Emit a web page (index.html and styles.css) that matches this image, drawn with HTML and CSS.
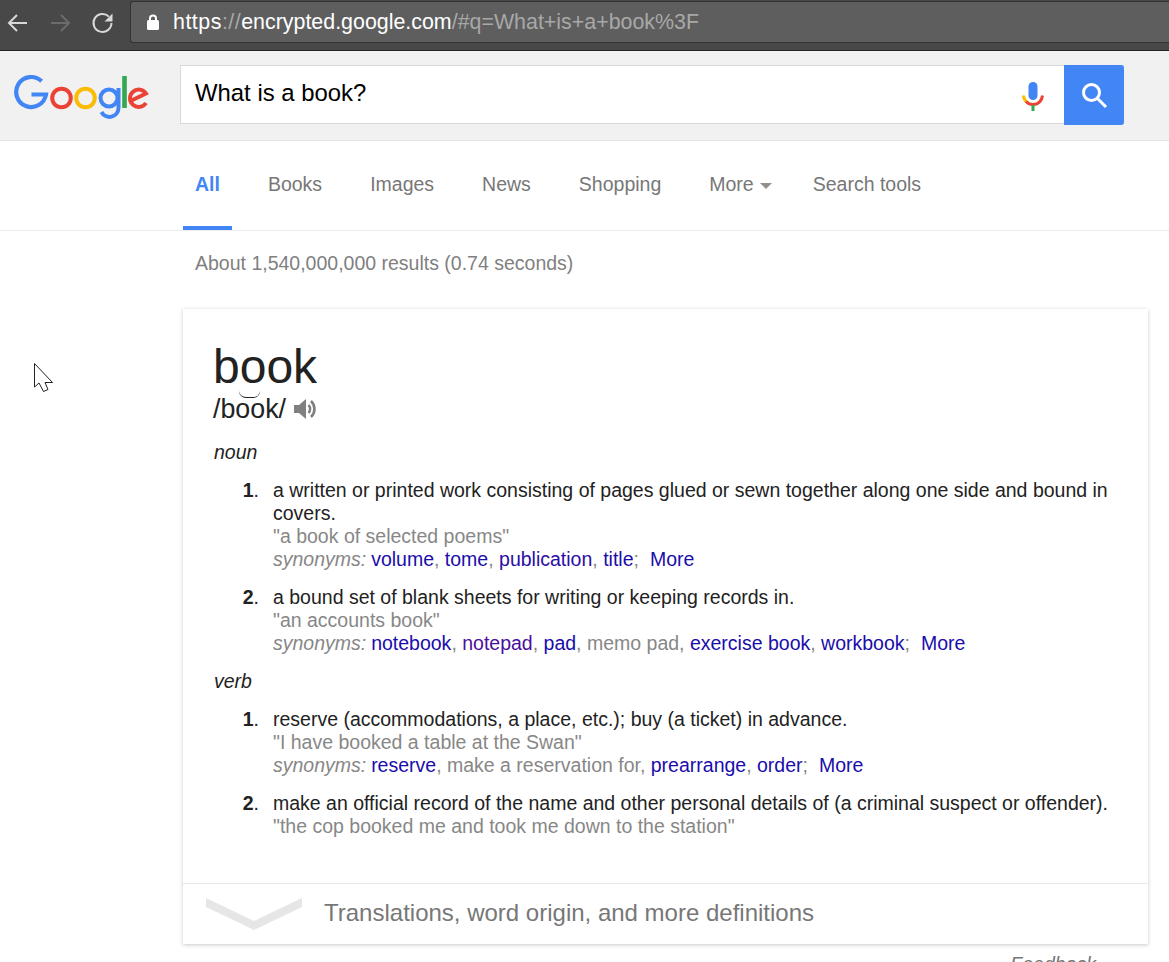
FILE: index.html
```html
<!DOCTYPE html>
<html lang="en">
<head>
<meta charset="utf-8">
<title>What is a book? - Google Search</title>
<link rel="stylesheet" href="styles.css">
</head>
<body>
<div class="chrome">
  <svg class="nav-icons" width="118" height="40" viewBox="0 0 118 40" fill="none" aria-hidden="true">
    <path d="M27 21H9M17 13l-8 8 8 8" stroke="#d8d8d8" stroke-width="2"/>
    <path d="M51 21h18M61 13l8 8-8 8" stroke="#6c6c6c" stroke-width="2"/>
    <path d="M111.500 21a9 9 0 1 1-2.600-6.400" stroke="#d8d8d8" stroke-width="2"/>
    <path d="M112.500 11.500v8h-8z" fill="#d8d8d8"/>
  </svg>
  <div class="omnibox">
    <svg class="lock" width="14" height="18" viewBox="0 0 14 18" aria-hidden="true">
      <path d="M4 8V5.500a3 3 0 0 1 6 0V8" fill="none" stroke="#fff" stroke-width="2"/>
      <rect x="1" y="7" width="12" height="10" rx="1.500" fill="#fff"/>
    </svg>
    <span class="url"><span class="url-main url-scheme">https</span><span class="url-dim url-scheme">://</span><span class="url-main">encrypted.google.com</span><span class="url-dim">/#q=What+is+a+book%3F</span></span>
  </div>
</div>

<header class="searchbar">
  <svg class="logo" width="138" height="48" viewBox="0 0 138 48" fill="none" role="img" aria-label="Google">
    <path d="M27.600 8.200A15 15 0 1 0 32 21.500H17.500" stroke="#4285f4" stroke-width="4.200"/>
    <circle cx="47.500" cy="25" r="9.300" stroke="#ea4335" stroke-width="4"/>
    <circle cx="71.500" cy="25" r="9.300" stroke="#fbbc05" stroke-width="4"/>
    <circle cx="95" cy="25" r="8.500" stroke="#4285f4" stroke-width="4"/>
    <path d="M104.500 15v20a9 9 0 0 1-17 4" stroke="#4285f4" stroke-width="4"/>
    <path d="M110.500 3v32" stroke="#34a853" stroke-width="4.600"/>
    <path d="M132 30A8.700 8.700 0 1 1 132 20.500L117.500 27.500" stroke="#ea4335" stroke-width="4"/>
  </svg>
  <div class="searchbox">
    <span class="query">What is a book?</span>
    <svg class="mic" width="22" height="30" viewBox="0 0 22 30" fill="none" aria-hidden="true">
      <rect x="6.500" y="1" width="9" height="18" rx="4.500" fill="#4285f4"/>
      <path d="M1.500 14.500a9.500 9.500 0 0 0 3 6.500" stroke="#fbbc05" stroke-width="3"/>
      <path d="M4 20.500a9.500 9.500 0 0 0 14 0c1.500-1.700 2.200-3.800 2.500-6" stroke="#ea4335" stroke-width="3"/>
      <rect x="9.500" y="24" width="3" height="6" fill="#34a853"/>
    </svg>
    <button class="search-btn" aria-label="Search">
      <svg width="28" height="28" viewBox="0 0 28 28" fill="none" aria-hidden="true">
        <circle cx="11.500" cy="11.500" r="8" stroke="#fff" stroke-width="3"/>
        <path d="M17.500 17.500L26 26" stroke="#fff" stroke-width="3"/>
      </svg>
    </button>
  </div>
</header>

<nav class="tabs">
  <a class="tab active">All</a>
  <a class="tab">Books</a>
  <a class="tab">Images</a>
  <a class="tab">News</a>
  <a class="tab">Shopping</a>
  <a class="tab">More<span class="caret"></span></a>
  <a class="tab tools">Search tools</a>
</nav>

<main class="results">
  <p class="stats">About 1,540,000,000 results (0.74 seconds)</p>
  <section class="card">
    <div class="card-body">
      <h1 class="word">book</h1>
      <div class="phon">
        <span class="phon-text">/b<span class="tie">o</span>ok/</span>
        <svg class="speaker" width="24" height="24" viewBox="0 0 24 24" aria-hidden="true">
          <path d="M1 8h5l7-6v20l-7-6H1z" fill="#808080"/>
          <path d="M15.500 8a6 6 0 0 1 0 8" fill="none" stroke="#808080" stroke-width="2.600"/>
          <path d="M18 4a11 11 0 0 1 0 16" fill="none" stroke="#808080" stroke-width="2.600"/>
        </svg>
      </div>

      <div class="pos">noun</div>
      <ol class="defs">
        <li class="def"><span class="num"><b>1</b>.</span><div>a written or printed work consisting of pages glued or sewn together along one side and bound in covers.<div class="eg">"a book of selected poems"</div><div class="syn"><em>synonyms:</em> <a class="lnk">volume</a>, <a class="lnk">tome</a>, <a class="vis-soft">publication</a>, <a class="lnk">title</a>;<a class="lnk more">More</a></div></div></li>
        <li class="def"><span class="num"><b>2</b>.</span><div>a bound set of blank sheets for writing or keeping records in.<div class="eg">"an accounts book"</div><div class="syn"><em>synonyms:</em> <a class="lnk">notebook</a>, <a class="vis">notepad</a>, <a class="lnk">pad</a>, memo pad, <a class="lnk">exercise book</a>, <a class="lnk">workbook</a>;<a class="lnk more">More</a></div></div></li>
      </ol>

      <div class="pos">verb</div>
      <ol class="defs">
        <li class="def"><span class="num"><b>1</b>.</span><div>reserve (accommodations, a place, etc.); buy (a ticket) in advance.<div class="eg">"I have booked a table at the Swan"</div><div class="syn"><em>synonyms:</em> <a class="lnk">reserve</a>, make a reservation for, <a class="lnk">prearrange</a>, <a class="lnk">order</a>;<a class="lnk more">More</a></div></div></li>
        <li class="def"><span class="num"><b>2</b>.</span><div>make an official record of the name and other personal details of (a criminal suspect or offender).<div class="eg">"the cop booked me and took me down to the station"</div></div></li>
      </ol>
    </div>
    <div class="card-foot">
      <svg width="98" height="34" viewBox="0 0 98 34" aria-hidden="true">
        <path d="M1 1l48 23 48-23v9L49 33 1 10z" fill="#e6e6e6"/>
      </svg>
      <span class="foot-text">Translations, word origin, and more definitions</span>
    </div>
  </section>
  <div class="feedback">Feedback</div>
</main>

<svg class="cursor" width="21" height="31" viewBox="0 0 21 31" aria-hidden="true">
  <path d="M1.500 1.500V25L6 21l4.500 8.500L15 27.500 12 20.500h7.500z" fill="#fff" stroke="#222" stroke-width="1"/>
</svg>
</body>
</html>
```
FILE: styles.css
```css
* { box-sizing: border-box; }
html, body { margin: 0; height: 962px; overflow: hidden; background: #fff; }
body { font-family: "Liberation Sans", Arial, sans-serif; font-size: 19.5px; line-height: 23px; color: #222; position: relative; }
a { text-decoration: none; }

.chrome { height: 51px; background: #484848; border-bottom: 1px solid #222; display: flex; padding: 1px 0 0 0; }
.nav-icons { flex: none; margin: 1px 12px 0 0; }
.omnibox { flex: 1; height: 42px; background: #5e5e5e; border: 1px solid #333; border-right: 0; border-radius: 3px 0 0 3px; display: flex; align-items: center; padding-left: 15px; }
.lock { flex: none; margin-right: 13px; }
.url { font-size: 21.400px; margin-top: 1px; }
.url-scheme { letter-spacing: .5px; }
.url-main { color: #fff; }
.url-dim { color: #a8a8a8; }

.searchbar { height: 90px; background: #f1f1f1; border-bottom: 1px solid #e5e5e5; display: flex; padding: 14px 0 0 14px; }
.logo { flex: none; margin: 8px 28px 0 0; }
.searchbox { width: 944px; height: 59px; background: #fff; border: 1px solid #d9d9d9; border-right: 0; display: flex; align-items: center; padding-left: 14px; }
.query { flex: 1; font-size: 23.900px; color: #000; margin-bottom: 5px; }
.mic { flex: none; margin: 2px 20px 0 0; }
.search-btn { flex: none; width: 60px; height: 60px; margin: 0; border: 0; border-radius: 0 3px 3px 0; background: #4285f4; display: flex; align-items: center; justify-content: center; padding: 0; align-self: flex-start; margin-top: -1px; }

.tabs { height: 90px; border-bottom: 1px solid #ebebeb; display: flex; padding-left: 183px; }
.tab { height: 89px; padding: 32px 12px 0; margin-right: 24px; color: #777; }
.tab.active { color: #4285f4; font-weight: bold; border-bottom: 4px solid #4285f4; }
.tab.tools { margin-left: -7px; }
.caret { display: inline-block; width: 0; height: 0; margin-left: 6px; vertical-align: 2px; border: 6px solid transparent; border-top: 6px solid #909090; border-bottom: 0; }

.results { padding-left: 183px; }
.stats { margin: 0; padding: 21px 0 0 12px; color: #808080; height: 78px; }
.card { width: 965px; height: 635px; background: #fff; box-shadow: 0 1px 4px rgba(0,0,0,.22); display: flex; flex-direction: column; }
.card-body { flex: 1; padding: 30px 30px 0; }
.word { margin: 0; font-size: 48px; font-weight: normal; line-height: 55px; color: #222; }
.phon { display: flex; align-items: center; gap: 7px; height: 30px; margin-bottom: 17px; font-size: 26.800px; }
.tie { position: relative; }
.tie::before { content: ""; position: absolute; left: 4px; top: -3px; width: 21px; height: 6px; border-bottom: 1.500px solid #222; border-radius: 0 0 12px 12px; }
.speaker { flex: none; }
.pos { font-style: italic; margin-top: 15px; padding-left: 1px; }
.defs { list-style: none; margin: 15px 0 15px; padding: 0; }
.def { display: grid; grid-template-columns: 46px 1fr; column-gap: 14px; margin-bottom: 15px; }
.def:last-child { margin-bottom: 0; }
.num { text-align: right; }
.eg { color: #878787; }
.syn { color: #878787; }
.syn em { font-style: italic; margin-right: -.5px; }
.lnk { color: #1a0dab; }
.vis { color: #4b0f9b; }
.vis-soft { color: #2c0da6; }
.more { margin-left: 11px; }

.card-foot { flex: none; height: 61px; border-top: 1px solid #e8e8e8; display: flex; align-items: center; gap: 21px; padding-left: 22px; }
.foot-text { font-size: 24px; color: #777; margin-bottom: 4px; }

.feedback { width: 913px; text-align: right; font-style: italic; color: #777; margin-top: 9px; }
.cursor { position: absolute; left: 33px; top: 362px; }
```
